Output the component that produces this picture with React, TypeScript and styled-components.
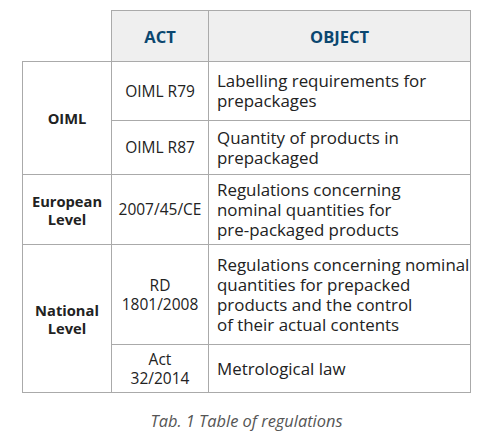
import { FC } from "react";
import styled, { createGlobalStyle } from "styled-components";

const colors = {
    border: "#aaaaaa",
    head: "#efefef",
    title: "#0b4770",
    text: "#222222",
    caption: "#555555",
};

const GlobalStyle = createGlobalStyle`
    html, body {
        margin: 0;
        background: #ffffff;
    }
    body {
        font-family: "Open Sans", "Liberation Sans", sans-serif;
        color: ${colors.text};
    }
`;

const Figure = styled.figure`
    margin: 0;
    padding: 10px 0 0 22px;
    width: 449px;
`;

const Table = styled.table`
    border-collapse: collapse;
    table-layout: fixed;
    width: 449px;
`;

const HeadRow = styled.tr`
    height: 51px;
`;

const Row = styled.tr<{ $h: number }>`
    height: ${(p) => p.$h}px;
`;

const Blank = styled.th`
    border: none;
    border-right: 1px solid ${colors.border};
    border-bottom: 1px solid ${colors.border};
    padding: 0;
`;

const HeadCell = styled.th`
    background: ${colors.head};
    border: 1px solid ${colors.border};
    color: ${colors.title};
    font-size: 16.5px;
    font-weight: 700;
    padding: 0;
    text-align: center;
    vertical-align: middle;
`;

const Group = styled.td`
    border: 1px solid ${colors.border};
    font-size: 14.7px;
    font-weight: 700;
    line-height: 18px;
    padding: 0;
    text-align: center;
    vertical-align: middle;
`;

const Act = styled.td`
    border: 1px solid ${colors.border};
    font-size: 15.5px;
    line-height: 18.5px;
    padding: 0;
    text-align: center;
    vertical-align: middle;
`;

const Obj = styled.td`
    border: 1px solid ${colors.border};
    font-size: 16.9px;
    line-height: 20px;
    padding: 0 0 0 8px;
    text-align: left;
    vertical-align: middle;
    white-space: nowrap;
    overflow: visible;
`;

const Caption = styled.figcaption`
    color: ${colors.caption};
    font-size: 16.4px;
    font-style: italic;
    margin-top: 16px;
    text-align: center;
`;

const App: FC = () => {
    return (
        <>
            <GlobalStyle />
            <Figure>
                <Table>
                    <colgroup>
                        <col style={{ width: 89 }} />
                        <col style={{ width: 97 }} />
                        <col style={{ width: 262 }} />
                    </colgroup>
                    <thead>
                        <HeadRow>
                            <Blank />
                            <HeadCell>ACT</HeadCell>
                            <HeadCell>OBJECT</HeadCell>
                        </HeadRow>
                    </thead>
                    <tbody>
                        <Row $h={59}>
                            <Group rowSpan={2}>OIML</Group>
                            <Act>OIML R79</Act>
                            <Obj>
                                Labelling requirements for
                                <br />
                                prepackages
                            </Obj>
                        </Row>
                        <Row $h={54}>
                            <Act>OIML R87</Act>
                            <Obj>
                                Quantity of products in
                                <br />
                                prepackaged
                            </Obj>
                        </Row>
                        <Row $h={70}>
                            <Group>
                                European
                                <br />
                                Level
                            </Group>
                            <Act>2007/45/CE</Act>
                            <Obj>
                                Regulations concerning
                                <br />
                                nominal quantities for
                                <br />
                                pre-packaged products
                            </Obj>
                        </Row>
                        <Row $h={100}>
                            <Group rowSpan={2}>
                                National
                                <br />
                                Level
                            </Group>
                            <Act>
                                RD
                                <br />
                                1801/2008
                            </Act>
                            <Obj>
                                Regulations concerning nominal
                                <br />
                                quantities for prepacked
                                <br />
                                products and the control
                                <br />
                                of their actual contents
                            </Obj>
                        </Row>
                        <Row $h={48}>
                            <Act>
                                Act
                                <br />
                                32/2014
                            </Act>
                            <Obj>Metrological law</Obj>
                        </Row>
                    </tbody>
                </Table>
                <Caption>Tab. 1 Table of regulations</Caption>
            </Figure>
        </>
    );
};

export default App;
